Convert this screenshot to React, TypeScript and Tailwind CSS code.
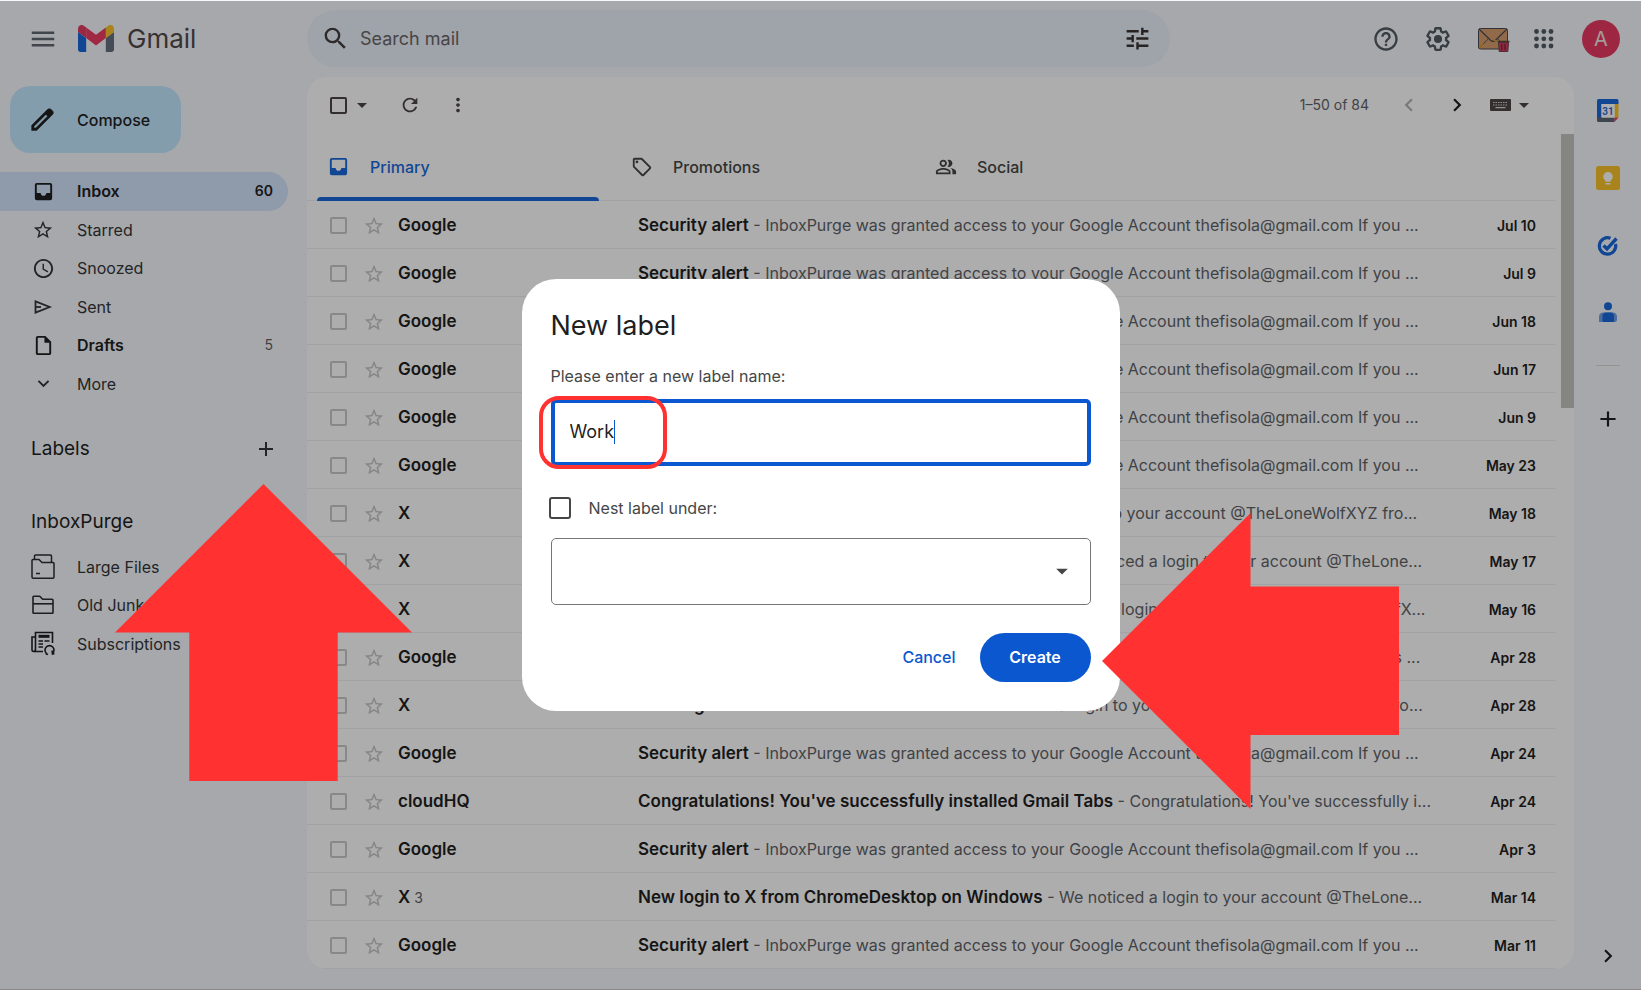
import React from "react";
import {
  MdAccessTime,
  MdAdd,
  MdArrowDropDown,
  MdChevronLeft,
  MdChevronRight,
  MdExpandMore,
  MdHelpOutline,
  MdMenu,
  MdMoreVert,
  MdOutlineInsertDriveFile,
  MdOutlinePeopleAlt,
  MdOutlineSell,
  MdRefresh,
  MdSearch,
  MdStarBorder,
  MdTune,
} from "react-icons/md";

type Mail = { from: string; count?: number; subject: string; snippet: string; date: string };

const ALERT = "Security alert";
const GRANTED = "InboxPurge was granted access to your Google Account thefisola@gmail.com If you ...";
const DESKTOP = "New login to X from ChromeDesktop on Windows";

const mails: Mail[] = [
  { from: "Google", subject: ALERT, snippet: GRANTED, date: "Jul 10" },
  { from: "Google", subject: ALERT, snippet: GRANTED, date: "Jul 9" },
  { from: "Google", subject: ALERT, snippet: GRANTED, date: "Jun 18" },
  { from: "Google", subject: ALERT, snippet: GRANTED, date: "Jun 17" },
  { from: "Google", subject: ALERT, snippet: GRANTED, date: "Jun 9" },
  { from: "Google", subject: ALERT, snippet: GRANTED, date: "May 23" },
  { from: "X", subject: "New login to X from Twitter on iPhone", snippet: "We noticed a login to your account @TheLoneWolfXYZ fro...", date: "May 18" },
  { from: "X", subject: DESKTOP, snippet: "We noticed a login to your account @TheLone...", date: "May 17" },
  { from: "X", subject: "New login to X from ChromeDesktop on Mac", snippet: "We noticed a login to your account @TheLoneWolfX...", date: "May 16" },
  { from: "Google", subject: ALERT, snippet: "InboxPurge was granted access to your Google Account thefisola@gmail.com Alerts ...", date: "Apr 28" },
  { from: "X", subject: "New login to X from Totsoro on iPhone", snippet: "We noticed a login to your account @TheLoneWolfXYZ fro...", date: "Apr 28" },
  { from: "Google", subject: ALERT, snippet: GRANTED, date: "Apr 24" },
  { from: "cloudHQ", subject: "Congratulations! You've successfully installed Gmail Tabs", snippet: "Congratulations! You've successfully i...", date: "Apr 24" },
  { from: "Google", subject: ALERT, snippet: GRANTED, date: "Apr 3" },
  { from: "X", count: 3, subject: DESKTOP, snippet: "We noticed a login to your account @TheLone...", date: "Mar 14" },
  { from: "Google", subject: ALERT, snippet: GRANTED, date: "Mar 11" },
];

function GmailLogo() {
  return (
    <svg width="36" height="27" viewBox="52 42 88 66" aria-hidden="true">
      <path fill="#1a68dc" d="M58 108h14V74L52 59v43c0 3.32 2.69 6 6 6" />
      <path fill="#667080" d="M120 108h14c3.32 0 6-2.69 6-6V59l-20 15" />
      <path fill="#fac228" d="M120 48v26l20-15v-8c0-7.42-8.47-11.65-14.4-7.2" />
      <path fill="#ec3c64" d="M72 74V48l24 18 24-18v26L96 92" />
      <path fill="#e23c62" d="M52 51v8l20 15V48l-5.6-4.2c-5.94-4.45-14.4-.22-14.4 7.2" />
    </svg>
  );
}

function InboxIcon() {
  return (
    <svg width="23" height="23" viewBox="0 0 24 24" fill="currentColor" className="shrink-0" aria-hidden="true">
      <path d="M19 3H5a2 2 0 0 0-2 2v14a2 2 0 0 0 2 2h14a2 2 0 0 0 2-2V5a2 2 0 0 0-2-2zm0 10.5h-4c0 1.66-1.35 3-3 3s-3-1.34-3-3H5V5h14z" />
    </svg>
  );
}

function Pencil() {
  return (
    <svg width="29" height="29" viewBox="0 0 24 24" fill="#1f1f1f" stroke="#1f1f1f" strokeWidth=".4" aria-hidden="true">
      <path d="M20.41 4.94l-1.35-1.35c-.78-.78-2.05-.78-2.83 0L3 16.82V21h4.18L20.41 7.77c.79-.78.79-2.05 0-2.83zM6.41 19.06L5 19v-1.36l9.82-9.82 1.41 1.41-9.82 9.83z" />
    </svg>
  );
}

function Gear() {
  return (
    <svg width="28" height="28" viewBox="0 0 24 24" fill="currentColor" aria-hidden="true">
      <path d="M13.85 22.25h-3.7c-.74 0-1.36-.54-1.45-1.27l-.27-1.89c-.27-.14-.53-.29-.79-.46l-1.8.72c-.7.26-1.47-.03-1.81-.65L2.2 15.53c-.35-.66-.2-1.44.36-1.88l1.53-1.19c-.01-.15-.02-.3-.02-.46 0-.15.01-.31.02-.46l-1.52-1.19c-.59-.45-.74-1.26-.37-1.88l1.85-3.19c.34-.62 1.11-.9 1.79-.63l1.81.73c.26-.17.52-.32.78-.46l.27-1.91c.09-.7.71-1.25 1.44-1.25h3.7c.74 0 1.36.54 1.45 1.27l.27 1.89c.27.14.53.29.79.46l1.8-.72c.71-.26 1.48.03 1.82.65l1.84 3.18c.36.66.2 1.44-.36 1.88l-1.52 1.19c.01.15.02.3.02.46s-.01.31-.02.46l1.52 1.19c.56.45.72 1.23.37 1.86l-1.86 3.22c-.34.62-1.11.9-1.8.63l-1.8-.72c-.26.17-.52.32-.78.46l-.27 1.91c-.1.68-.72 1.22-1.46 1.22zm-3.23-2h2.76l.37-2.55.53-.22c.44-.18.88-.44 1.34-.78l.45-.34 2.38.96 1.38-2.4-2.03-1.58.07-.56c.03-.26.06-.51.06-.78s-.03-.53-.06-.78l-.07-.56 2.03-1.58-1.39-2.4-2.39.96-.45-.35c-.42-.32-.87-.58-1.33-.77l-.52-.22-.37-2.55h-2.76l-.37 2.55-.53.21c-.44.19-.88.44-1.34.79l-.45.33-2.38-.95-1.39 2.39 2.03 1.58-.07.56a7 7 0 0 0-.06.79c0 .26.02.53.06.78l.07.56-2.03 1.58 1.38 2.4 2.39-.96.45.35c.43.33.86.58 1.33.77l.53.22.38 2.55z" />
      <circle cx="12" cy="12" r="3.5" />
    </svg>
  );
}

function PurgeMail() {
  return (
    <svg width="34" height="26" viewBox="0 0 34 26" fill="none" aria-hidden="true">
      <rect x="2.5" y="2.5" width="29" height="20.5" rx="2" fill="#d69d6c" stroke="#4a4a55" />
      <path d="M3 22.5L13 12M31 22.5L21 12" stroke="#6a5550" />
      <path d="M3.5 22l4-4" stroke="#e0a020" strokeWidth="1.2" />
      <path d="M3 3l11.5 11.2q2.5 2.2 5 0L31 3" stroke="#4a4a55" strokeWidth="1.2" />
      <path d="M18 14.5h11" stroke="#e0a020" strokeDasharray="2 1" />
      <path d="M21.5 15.5h12" stroke="#5a4a50" strokeWidth="1.5" />
      <path d="M22.5 16.5h10l-.7 9h-8.6z" fill="#d8395c" stroke="#6b4550" />
      <path d="M25.8 18v6M29 18v6" stroke="#4d2a35" />
    </svg>
  );
}

function Apps() {
  return (
    <svg width="24" height="20" viewBox="0 0 24 20" fill="currentColor" aria-hidden="true">
      {[2.5, 9.8, 17].map((y) => [2.5, 9.8, 17].map((x) => <circle key={`${x}-${y}`} cx={x} cy={y} r="2.4" />))}
    </svg>
  );
}

function SendIcon() {
  return (
    <svg width="24" height="24" viewBox="0 0 24 24" fill="none" stroke="currentColor" strokeWidth="1.8" aria-hidden="true">
      <path d="M4.5 6.3L18.7 12 4.5 17.7z" />
      <path d="M4.5 12H10" />
    </svg>
  );
}

function LargeFiles() {
  return (
    <svg width="24" height="26" viewBox="0 0 24 26" fill="none" stroke="#2a2d33" strokeWidth="1.5" aria-hidden="true">
      <path d="M1 8V6.5Q1 5.5 2 5.5h6l3 3h11q1 0 1 1V23q0 1.2-1.2 1.2H2.2Q1 24.2 1 23z" />
      <path d="M3.5 5.5V2q0-1 1-1h15q1 0 1 1v6.5" />
      <path d="M5 19.5h4" />
    </svg>
  );
}

function JunkFolder() {
  return (
    <svg width="24" height="20" viewBox="0 0 24 20" fill="none" stroke="#2a2d33" strokeWidth="1.6" aria-hidden="true">
      <path d="M2 17.5V2q0-.7.7-.7h6l3 3H21q1 0 1 1v12.2q0 .7-.7.7H2.7Q2 18.2 2 17.5z" />
      <path d="M2 8.8h20" />
    </svg>
  );
}

function Newspaper() {
  return (
    <svg width="24" height="25" viewBox="0 0 24 25" fill="none" stroke="#1d1f24" strokeWidth="1.6" aria-hidden="true">
      <path d="M12 20.5H2.5Q1 20.5 1 19V6h3M4.5 19V1.5h17V12M4.5 18q0 2.5-2 2.5" />
      <path d="M7.5 5.3h11" strokeWidth="3" />
      <path d="M7.5 10h4.5M13.5 10h5M7.5 13h4.5M7.5 16h4.5" />
      <path d="M15.5 22.5a4.5 4.5 0 1 1 6 0M21 19.5l.5 3.5 2-.5M17 23.5l-2.5-1" />
    </svg>
  );
}

function KeyboardIcon() {
  return (
    <svg width="22" height="12" viewBox="0 0 22 12" aria-hidden="true">
      <rect width="21" height="12" rx="1" fill="#4d4444" />
      <path d="M3 3.5h15M3 6h15" stroke="#d8d8d8" strokeWidth="1.2" strokeDasharray="1.5 1" />
      <path d="M5.5 8.7h10" stroke="#d8d8d8" strokeWidth="1.3" />
    </svg>
  );
}

function CalendarLogo() {
  return (
    <svg width="22" height="23" viewBox="0 0 22 23" aria-label="Calendar">
      <path fill="#1a68dc" d="M1.5 0H20q1.5 0 1.5 1.5V5h-17v14H0V1.5Q0 0 1.5 0z" />
      <path fill="#fac228" d="M17.5 5h4v13.5h-4z" />
      <path fill="#5c6675" d="M0 18.5h17.5V23h-16Q0 23 0 21.5z" />
      <path fill="#ec3c64" d="M17.5 18.5h4l-4 4.5z" />
      <path fill="#fff" d="M4.5 5h13v13.5h-13z" />
      <text x="11" y="15.5" textAnchor="middle" fontSize="10" fontWeight="600" fill="#1a68dc" fontFamily="Roboto, sans-serif">31</text>
    </svg>
  );
}

function KeepLogo() {
  return (
    <svg width="24" height="24" viewBox="0 0 24 24" aria-label="Keep">
      <rect width="24" height="24" rx="2.5" fill="#fac228" />
      <path fill="#fff" d="M12 6a4.700 4.700 0 0 0-2.600 8.600V15.800h5.200V14.600A4.700 4.700 0 0 0 12 6zM9.500 17h5v1.500h-5z" />
    </svg>
  );
}

function TasksLogo() {
  return (
    <svg width="24" height="24" viewBox="0 0 24 24" fill="none" stroke="#1a68dc" aria-label="Tasks">
      <path d="M14.5 4.3A8.2 8.2 0 1 0 19.5 10" strokeWidth="3.2" />
      <path d="M7.5 11.5l3.5 3.3L20.5 4.5" strokeWidth="3.4" />
    </svg>
  );
}

function ContactsLogo() {
  return (
    <svg width="18" height="21" viewBox="0 0 18 21" aria-label="Contacts">
      <circle cx="9" cy="4.2" r="4" fill="#1a68dc" />
      <path fill="#6f9fe8" d="M0 20v-5q0-4.5 4.5-4.5h9q4.5 0 4.5 4.5v3q0 2-2 2z" />
      <path fill="#1a68dc" d="M3.5 20v-5.5q0-4 4-4h4q3.5 0 3.5 4V20z" />
    </svg>
  );
}

function NavItem({ icon, label, count, active, bold }: { icon: React.ReactNode; label: string; count?: number; active?: boolean; bold?: boolean }) {
  return (
    <li className="flex flex-1">
      <a
        href="#"
        className={
          "flex flex-1 items-center gap-[22px] rounded-r-full pl-[31px] pr-[15px] text-base " +
          (active ? "bg-[#d3e3fd] " : "") +
          (active || bold ? "font-semibold text-[#1f1f1f]" : "text-[#333639]")
        }
      >
        <span className="flex w-6 justify-center">{icon}</span>
        <span className="flex-1">{label}</span>
        {count !== undefined && <span className={active ? "text-sm" : "text-sm font-normal text-[#5f6368]"}>{count}</span>}
      </a>
    </li>
  );
}

function UpArrow() {
  return (
    <svg className="absolute top-full -left-[139px] z-20 mt-[23px]" width="297" height="297" viewBox="0 0 297 297" aria-hidden="true">
      <path fill="#ff3131" d="M148.5 0L297 148.5H222.7V297H74.3V148.5H0z" />
    </svg>
  );
}

function LeftArrow() {
  return (
    <svg className="absolute -top-[120px] left-full ml-[11px]" width="297" height="296" viewBox="0 0 297 296" aria-hidden="true">
      <path fill="#ff3131" d="M0 148L148.5 0V73.5H297V222H148.5V296z" />
    </svg>
  );
}

function NewLabelDialog() {
  return (
    <div className="fixed inset-x-0 top-px bottom-0 z-10 flex items-center justify-center bg-black/32 pb-0.5">
      <div role="dialog" aria-labelledby="dialog-title" className="w-[598px] rounded-[34px] bg-white p-[29px]">
        <h2 id="dialog-title" className="text-[27px] leading-9 text-[#1f1f1f]">New label</h2>
        <label htmlFor="label-name" className="mt-5 block text-base leading-6 text-[#444746]">Please enter a new label name:</label>
        <div className="relative mt-[11px] flex h-[67px] items-center rounded-[5px] border-4 border-[#0b57d0] pl-[15px]">
          <input id="label-name" defaultValue="Work" className="text-lg text-[#1f1f1f] outline-none [field-sizing:content]" />
          <span className="h-6 w-px bg-[#0b57d0]" />
          <div className="pointer-events-none absolute -top-[7px] -left-4 h-[73px] w-[128px] rounded-[20px] border-4 border-[#ff3131]" />
        </div>
        <div className="mt-[30px] flex h-6 items-center gap-[18px]">
          <input id="nest" type="checkbox" className="-ml-0.5 size-[22px] appearance-none rounded-[3px] border-2 border-[#444746]" />
          <label htmlFor="nest" className="text-base text-[#444746]">Nest label under:</label>
        </div>
        <div className="relative mt-[18px]">
          <select aria-label="Parent label" className="block h-[67px] w-full appearance-none rounded-[5px] border border-[#747775] bg-white px-4">
            <option></option>
          </select>
          <MdArrowDropDown size={28} className="pointer-events-none absolute top-[19px] right-[15px] text-[#444746]" />
        </div>
        <div className="mt-7 flex h-[49px] items-center justify-end gap-6 text-base font-medium">
          <button className="text-[#0b57d0]">Cancel</button>
          <div className="relative">
            <button className="h-[49px] w-[111px] rounded-full bg-[#0b57d0] font-semibold text-white">Create</button>
            <LeftArrow />
          </div>
        </div>
      </div>
    </div>
  );
}

const boxClass = "block size-[17px] appearance-none rounded-[2px] border-2";

export default function App() {
  return (
    <div className="flex min-h-screen flex-col border-b border-[#cfc8ca] bg-[#f6f8fc] font-['Inter',sans-serif] text-[#1f1f1f]">
      <header className="flex h-[77px] items-center">
        <div className="flex w-[307px] shrink-0 items-center pl-[28px]">
          <button aria-label="Main menu" className="text-[#5f6870]"><MdMenu size={30} /></button>
          <a href="#" className="ml-5 flex items-center gap-[13px]">
            <GmailLogo />
            <span className="text-[26px] leading-8 text-[#51494a]">Gmail</span>
          </a>
        </div>
        <form className="flex h-[57px] w-[863px] items-center rounded-full bg-[#eaf1fb] pr-[18px] pl-[14px]">
          <MdSearch size={29} className="text-[#443f40]" />
          <input aria-label="Search mail" placeholder="Search mail" className="ml-[10px] flex-1 text-lg outline-none placeholder:text-[#6b6768]" />
          <button type="button" aria-label="Search options" className="text-[#3a3434]"><MdTune size={29} /></button>
        </form>
        <div className="ml-auto flex items-center gap-6 pr-[21px] text-[#505a64]">
          <button aria-label="Support"><MdHelpOutline size={28} /></button>
          <button aria-label="Settings"><Gear /></button>
          <button aria-label="InboxPurge"><PurgeMail /></button>
          <button aria-label="Google apps"><Apps /></button>
          <button aria-label="Account" className="size-[38px] rounded-full bg-[#e83a62] text-xl text-[#f2e4e0]">A</button>
        </div>
      </header>

      <div className="flex flex-1 pb-5">
        <nav className="w-[307px] shrink-0 pr-[19px]">
          <button className="mt-[9px] ml-[10px] flex h-[67px] w-[171px] items-center gap-5 rounded-[20px] bg-[#c2e7ff] pl-[18px] text-base font-medium">
            <Pencil />
            Compose
          </button>
          <ul className="mt-[19px] flex h-[231px] flex-col">
            <NavItem icon={<InboxIcon />} label="Inbox" count={60} active />
            <NavItem icon={<MdStarBorder size={22} />} label="Starred" />
            <NavItem icon={<MdAccessTime size={23} />} label="Snoozed" />
            <NavItem icon={<SendIcon />} label="Sent" />
            <NavItem icon={<MdOutlineInsertDriveFile size={23} />} label="Drafts" count={5} bold />
            <NavItem icon={<MdExpandMore size={23} />} label="More" />
          </ul>
          <div className="mt-[26px] flex h-10 items-center justify-between pr-[10px] pl-[31px]">
            <h2 className="text-[19px]">Labels</h2>
            <div className="relative">
              <button aria-label="Create new label" className="block text-[#333639]"><MdAdd size={24} /></button>
              <UpArrow />
            </div>
          </div>
          <h2 className="mt-[41px] pl-[31px] text-[19px] leading-6">InboxPurge</h2>
          <ul className="mt-[14px] flex h-[115px] flex-col">
            <NavItem icon={<LargeFiles />} label="Large Files" />
            <NavItem icon={<JunkFolder />} label="Old Junk" />
            <NavItem icon={<Newspaper />} label="Subscriptions" />
          </ul>
        </nav>

        <main className="flex flex-1 flex-col overflow-hidden rounded-[20px] bg-white">
          <div className="flex h-14 items-center pr-[38px] pl-[23px] text-[#4d4444]">
            <input type="checkbox" aria-label="Select all" className={boxClass + " border-[#4d4444]"} />
            <button aria-label="Selection menu" className="ml-[3px]"><MdArrowDropDown size={24} /></button>
            <button aria-label="Refresh" className="ml-[25px]"><MdRefresh size={22} /></button>
            <button aria-label="More actions" className="ml-[26px]"><MdMoreVert size={22} /></button>
            <span className="ml-auto text-sm text-[#5f6368]">1–50 of 84</span>
            <button aria-label="Newer" className="ml-[27px] text-[#b0b3b8]"><MdChevronLeft size={26} /></button>
            <button aria-label="Older" className="ml-[22px] text-[#1f1f1f]"><MdChevronRight size={26} /></button>
            <button aria-label="Input tools" className="ml-5 flex items-center"><KeyboardIcon /><MdArrowDropDown size={24} /></button>
          </div>

          <div className="flex flex-1">
            <div className="flex-1">
              <div role="tablist" className="flex h-[68px] border-b border-[#eceff1] text-base font-medium text-[#444746]">
                <button role="tab" aria-selected="true" className="relative flex w-[304px] items-center gap-5 pl-5 text-[#1a68dc]">
                  <InboxIcon />
                  Primary
                  <span className="absolute -bottom-px left-2.5 right-3 h-1 rounded-t bg-[#1a68dc]" />
                </button>
                <button role="tab" className="flex w-[304px] items-center gap-5 pl-5">
                  <MdOutlineSell size={22} />
                  Promotions
                </button>
                <button role="tab" className="flex w-[304px] items-center gap-5 pl-5">
                  <MdOutlinePeopleAlt size={22} />
                  Social
                </button>
              </div>
              <table className="w-full table-fixed border-separate border-spacing-0">
                <colgroup>
                  <col className="w-[54px]" />
                  <col className="w-[37px]" />
                  <col className="w-[240px]" />
                  <col />
                  <col className="w-[110px]" />
                </colgroup>
                <tbody>
                  {mails.map((m, i) => (
                    <tr key={i}>
                      <td className="h-12 border-b border-[#eceff1] pt-px pl-[23px]">
                        <input type="checkbox" aria-label={`Select ${m.from}`} className={boxClass + " border-[#c6c9cc]"} />
                      </td>
                      <td className="border-b border-[#eceff1] pt-[3px] pl-0.5">
                        <button aria-label="Star" className="block text-[#c4c4c4]"><MdStarBorder size={22} /></button>
                      </td>
                      <td className="border-b border-[#eceff1] pt-0.5 text-[17px] font-semibold">
                        {m.from}
                        {m.count && <span className="ml-1 text-sm font-normal text-[#5f6368]">{m.count}</span>}
                      </td>
                      <td className="border-b border-[#eceff1] pt-0.5 whitespace-nowrap">
                        <span className="text-[17px] font-semibold">{m.subject}</span>
                        <span className="text-base text-[#5f6368]"> - {m.snippet}</span>
                      </td>
                      <td className="border-b border-[#eceff1] pt-0.5 pr-5 text-right text-sm font-semibold">{m.date}</td>
                    </tr>
                  ))}
                </tbody>
              </table>
            </div>
            <div className="ml-[5px] w-[13px] pt-px">
              <div className="h-[274px] bg-[#c5c4c0]" />
            </div>
          </div>
        </main>

        <aside className="flex w-[67px] flex-col items-center pt-[22px]">
          <button><CalendarLogo /></button>
          <button className="mt-11"><KeepLogo /></button>
          <button className="mt-11"><TasksLogo /></button>
          <button className="mt-11"><ContactsLogo /></button>
          <hr className="mt-[42px] w-6 border-[#dcd8d4]" />
          <button aria-label="Get add-ons" className="mt-10"><MdAdd size={26} /></button>
          <button aria-label="Hide side panel" className="mt-auto"><MdChevronRight size={26} /></button>
        </aside>
      </div>

      <NewLabelDialog />
    </div>
  );
}
